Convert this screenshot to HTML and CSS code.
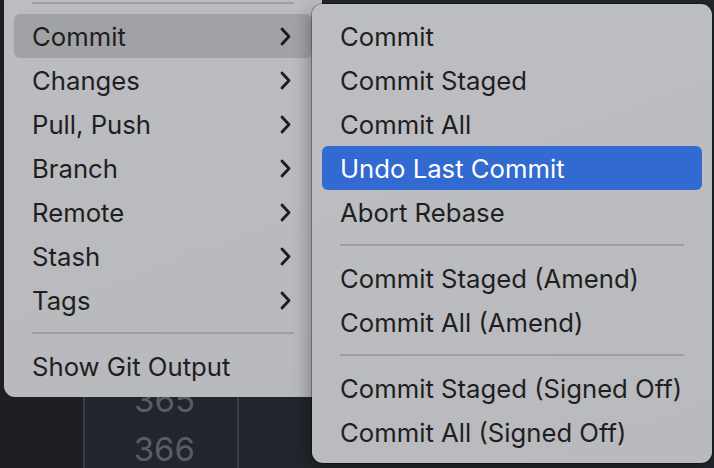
FILE: index.html
```html
<!DOCTYPE html>
<html>
<head>
<meta charset="utf-8">
<link rel="stylesheet" href="styles.css">
</head>
<body>
<div class="editor">
  <div class="gutter-left"></div>
  <div class="numbers">
    <div class="ln">365</div>
    <div class="ln">366</div>
  </div>
  <div class="code"></div>
</div>

<div class="menu main-menu">
  <div class="sep"></div>
  <div class="item active-gray"><span>Commit</span><svg class="chev" viewBox="0 0 11 19" width="11" height="19"><polyline points="2,2 9,9.5 2,17"/></svg></div>
  <div class="item"><span>Changes</span><svg class="chev" viewBox="0 0 11 19" width="11" height="19"><polyline points="2,2 9,9.5 2,17"/></svg></div>
  <div class="item"><span>Pull, Push</span><svg class="chev" viewBox="0 0 11 19" width="11" height="19"><polyline points="2,2 9,9.5 2,17"/></svg></div>
  <div class="item"><span>Branch</span><svg class="chev" viewBox="0 0 11 19" width="11" height="19"><polyline points="2,2 9,9.5 2,17"/></svg></div>
  <div class="item"><span>Remote</span><svg class="chev" viewBox="0 0 11 19" width="11" height="19"><polyline points="2,2 9,9.5 2,17"/></svg></div>
  <div class="item"><span>Stash</span><svg class="chev" viewBox="0 0 11 19" width="11" height="19"><polyline points="2,2 9,9.5 2,17"/></svg></div>
  <div class="item"><span>Tags</span><svg class="chev" viewBox="0 0 11 19" width="11" height="19"><polyline points="2,2 9,9.5 2,17"/></svg></div>
  <div class="sep"></div>
  <div class="item"><span>Show Git Output</span></div>
</div>

<div class="menu sub-menu">
  <div class="item"><span>Commit</span></div>
  <div class="item"><span>Commit Staged</span></div>
  <div class="item"><span>Commit All</span></div>
  <div class="item active-blue"><span>Undo Last Commit</span></div>
  <div class="item"><span>Abort Rebase</span></div>
  <div class="sep"></div>
  <div class="item"><span>Commit Staged (Amend)</span></div>
  <div class="item"><span>Commit All (Amend)</span></div>
  <div class="sep"></div>
  <div class="item"><span>Commit Staged (Signed Off)</span></div>
  <div class="item"><span>Commit All (Signed Off)</span></div>
</div>
</body>
</html>
```

FILE: styles.css
```css
html, body {
  margin: 0;
  padding: 0;
}
body {
  width: 714px;
  height: 468px;
  overflow: hidden;
  position: relative;
  background: #1e2025;
  font-family: Inter, "Noto Sans", sans-serif;
}
.editor {
  display: flex;
  height: 468px;
}
.gutter-left {
  width: 83px;
  background: #1d1f24;
  border-right: 2px solid #393d48;
}
.numbers {
  width: 154px;
  background: #22252b;
  border-right: 2px solid #393d48;
  padding-top: 376px;
  box-sizing: border-box;
  padding-right: 42px;
  text-align: right;
}
.ln {
  font-size: 33px;
  line-height: 49px;
  color: #575c69;
}
.code {
  flex: 1;
  background: #22252b;
}
.menu {
  position: absolute;
  background: #b9bbbe;
  border-radius: 11px;
  box-sizing: border-box;
}
.main-menu {
  left: 4px;
  top: -18px;
  width: 318px;
  padding: 10px 10px 9px;
  background: linear-gradient(160deg, #bbbdc0, #b7b9bc);
}
.sub-menu {
  left: 312px;
  top: 4px;
  width: 400px;
  padding: 10px 10px 9px;
  background: linear-gradient(160deg, #bcbec1, #b8babd);
  box-shadow: 0 0 0 1px rgba(0, 0, 0, 0.28), -4px 6px 16px rgba(0, 0, 0, 0.28);
}
.sep {
  height: 2px;
  margin: 10px 18px;
  background: #9d9fa3;
}
.item {
  height: 44px;
  box-sizing: border-box;
  display: flex;
  align-items: center;
  justify-content: space-between;
  padding: 1px 21px 0 18px;
  border-radius: 6px;
  font-size: 25.7px;
  white-space: nowrap;
  color: #1f1f21;
}
.active-gray {
  background: #a0a2a5;
}
.active-blue {
  background: #326ad1;
  color: #ffffff;
}
.chev polyline {
  fill: none;
  stroke: #1c1c1e;
  stroke-width: 2.8;
  stroke-linecap: round;
  stroke-linejoin: round;
}
```
